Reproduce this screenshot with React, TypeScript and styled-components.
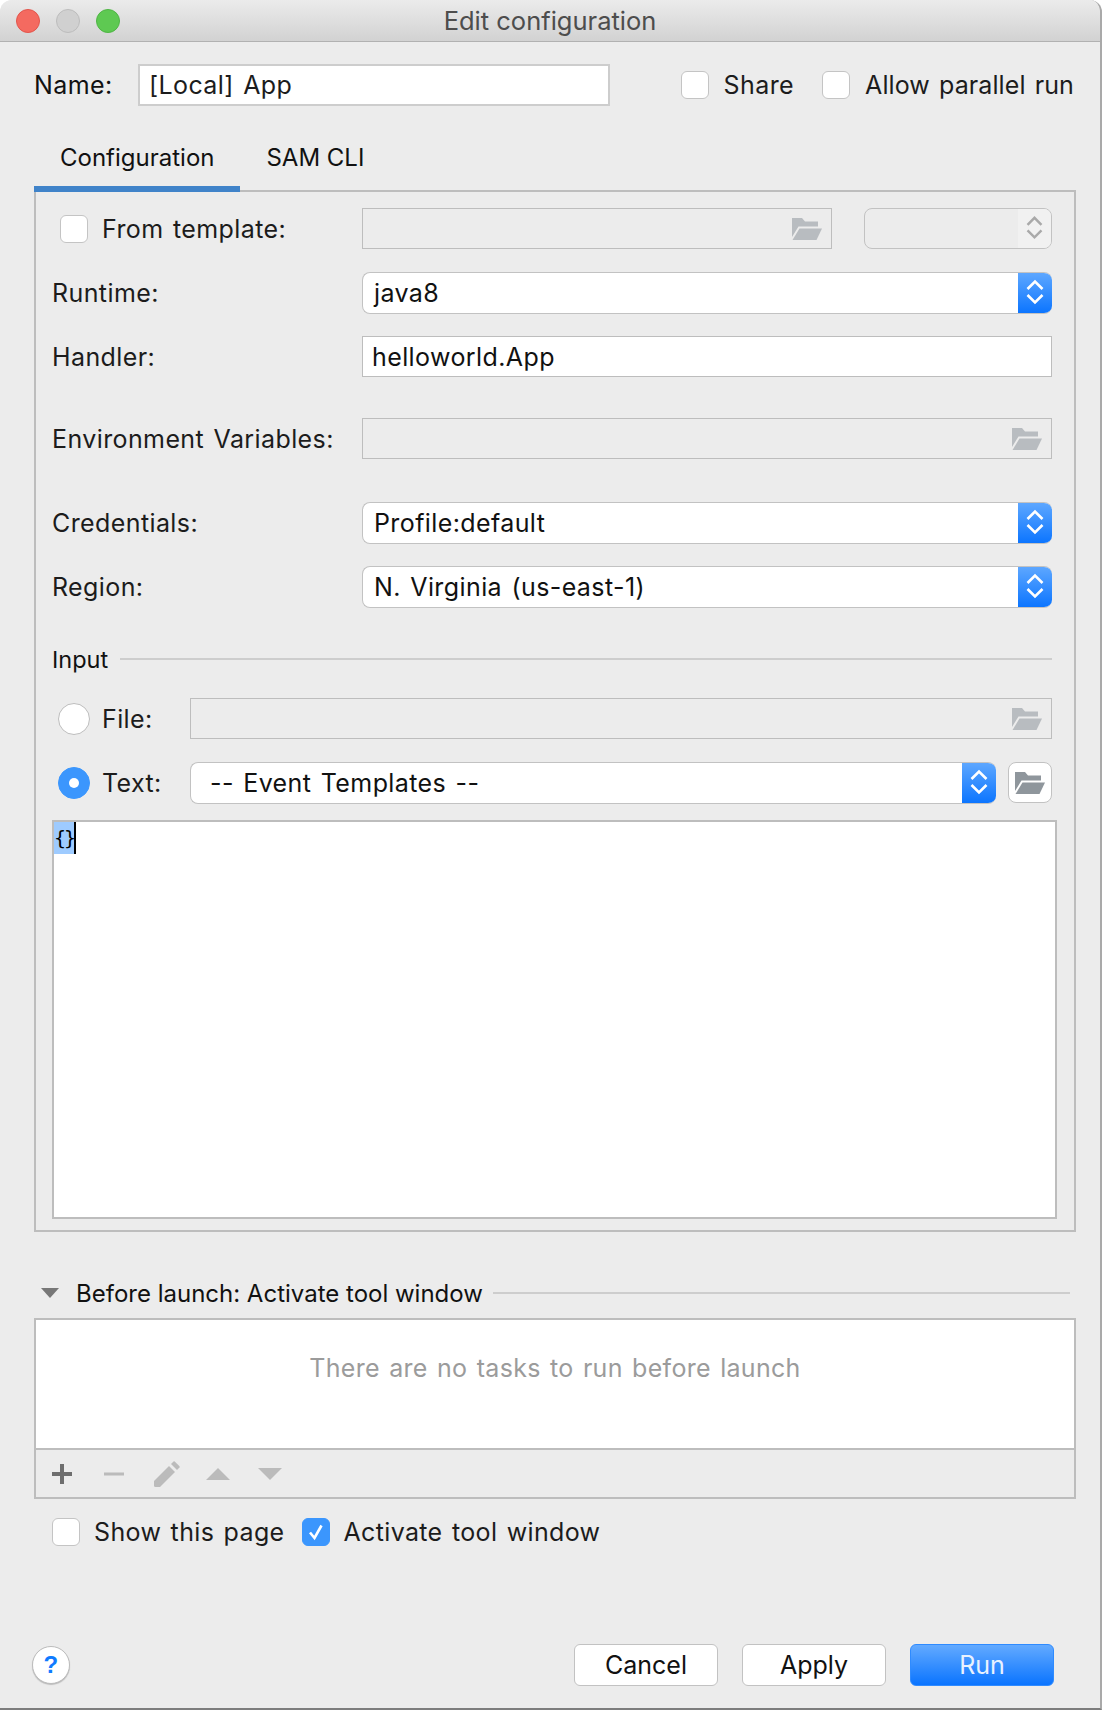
import React from "react";
import styled, { createGlobalStyle } from "styled-components";

const Global = createGlobalStyle`
  html, body { margin: 0; padding: 0; background: #fff; }
  * { box-sizing: border-box; }
  body { font-family: Inter, "Liberation Sans", sans-serif; color: #1c1c1c; }
`;

const Window = styled.div`
  width: 1102px;
  height: 1710px;
  display: flex;
  flex-direction: column;
  background: #ececec;
  border-right: 2px solid #a9a9a9;
  border-bottom: 2px solid #7d7d7d;
  border-radius: 12px 12px 0 0;
  font-size: 25px;
  letter-spacing: 0.4px;
  word-spacing: 2px;
  overflow: hidden;
`;
const TitleBar = styled.div`
  height: 42px;
  flex: none;
  display: flex;
  align-items: center;
  padding-left: 16px;
  gap: 16px;
  position: relative;
  background: linear-gradient(#ebebeb, #d2d2d2);
  border-bottom: 1px solid #b1b1b1;
`;
const Light = styled.span<{ $c: string; $b: string }>`
  width: 24px;
  height: 24px;
  border-radius: 50%;
  background: ${(p) => p.$c};
  border: 1px solid ${(p) => p.$b};
`;
const Title = styled.div`
  position: absolute;
  left: 0;
  right: 0;
  top: 5px;
  text-align: center;
  font-size: 25.5px;
  letter-spacing: 0;
  word-spacing: 0;
  line-height: 32px;
  color: #4d4d4d;
`;
const Body = styled.div`
  flex: 1;
  display: flex;
  flex-direction: column;
  padding: 0 24px 22px 34px;
`;
const NameRow = styled.div`
  margin-top: 22px;
  height: 42px;
  display: flex;
  align-items: center;
  padding-right: 2px;
`;
const NameLabel = styled.label`
  width: 104px;
  color: #111;
`;
const NameInput = styled.div`
  width: 472px;
  height: 42px;
  background: #fff;
  border: 2px solid #cdcdcd;
  padding-left: 9px;
  display: flex;
  align-items: center;
  white-space: pre;
`;
const Checks = styled.div`
  margin-left: auto;
  display: flex;
  align-items: center;
  gap: 28px;
`;
const CheckWrap = styled.label`
  display: flex;
  align-items: center;
  gap: 15px;
  white-space: nowrap;
`;
const TightCheckWrap = styled(CheckWrap)`
  letter-spacing: 0.1px;
`;
const CheckBox = styled.span<{ $on?: boolean }>`
  width: 28px;
  height: 28px;
  flex: none;
  display: flex;
  align-items: center;
  justify-content: center;
  border-radius: 6px;
  background: ${(p) => (p.$on ? "#3b96fd" : "#fff")};
  border: 1px solid ${(p) => (p.$on ? "#3b96fd" : "#c4c4c4")};
`;
const Tabs = styled.div`
  display: flex;
  margin-top: 40px;
  position: relative;
  z-index: 1;
`;
const Tab = styled.div<{ $on?: boolean }>`
  padding: 0 26px 16px;
  font-size: 24px;
  letter-spacing: 0;
  word-spacing: 0;
  line-height: 24px;
  border-bottom: 6px solid ${(p) => (p.$on ? "#4083c9" : "transparent")};
  color: #111;
`;
const Panel = styled.div`
  margin-top: -2px;
  height: 1042px;
  border: 2px solid #bdbdbd;
  padding: 16px 22px 0 16px;
  display: flex;
  flex-direction: column;
`;
const FieldRow = styled.div<{ $top?: number; $col?: number }>`
  display: grid;
  grid-template-columns: ${(p) => p.$col ?? 310}px 1fr;
  align-items: center;
  margin-top: ${(p) => p.$top ?? 0}px;
  height: 41px;
`;
const FieldLabel = styled.label`
  white-space: nowrap;
  display: flex;
  align-items: center;
`;
const Offset = styled(CheckWrap)`
  margin-left: 8px;
  gap: 14px;
`;
const TemplateFields = styled.div`
  display: flex;
  gap: 32px;
`;
const PathField = styled.div<{ $off?: boolean }>`
  flex: 1;
  height: 41px;
  background: ${(p) => (p.$off ? "transparent" : "#fff")};
  border: 1px solid #bdbdbd;
  display: flex;
  align-items: center;
  justify-content: ${(p) => (p.$off ? "flex-end" : "flex-start")};
  padding: 0 9px;
  color: #111;
`;
const Select = styled.div<{ $pad?: number }>`
  flex: 1;
  height: 42px;
  background: #fff;
  border: 1px solid #c2c2c2;
  border-right: 0;
  border-radius: 8px;
  display: flex;
  align-items: center;
  justify-content: space-between;
  overflow: hidden;
  padding-left: ${(p) => p.$pad ?? 11}px;
  color: #111;
`;
const Arrow = styled.span`
  width: 34px;
  height: 42px;
  margin: -1px 0;
  flex: none;
  background: linear-gradient(#5fa8ff, #0a74ff);
  display: flex;
`;
const Spinner = styled.div`
  width: 188px;
  height: 41px;
  flex: none;
  border: 1px solid #c2c2c2;
  border-radius: 8px;
  display: flex;
  justify-content: flex-end;
  overflow: hidden;
`;
const SpinnerArrow = styled.span`
  width: 33px;
  height: 39px;
  background: #f1f1f1;
  display: flex;
  align-items: center;
`;
const Section = styled.div`
  margin-top: 37px;
  height: 30px;
  display: flex;
  align-items: center;
  gap: 12px;
  font-size: 23.5px;
  letter-spacing: 0;
  color: #111;
`;
const Rule = styled.span`
  flex: 1;
  height: 2px;
  background: #cdcdcd;
`;
const InputRow = styled.div`
  display: flex;
  gap: 12px;
`;
const FolderButton = styled.div`
  width: 44px;
  height: 41px;
  flex: none;
  background: #fff;
  border: 1px solid #c2c2c2;
  border-radius: 8px;
  display: flex;
  align-items: center;
  justify-content: center;
`;
const Radio = styled.span<{ $on?: boolean }>`
  width: 32px;
  height: 32px;
  flex: none;
  border-radius: 50%;
  background: ${(p) => (p.$on ? "#3b96fd" : "#fff")};
  border: 1px solid ${(p) => (p.$on ? "#3b96fd" : "#bdbdbd")};
  display: flex;
  align-items: center;
  justify-content: center;
  &::after {
    content: "";
    width: 10px;
    height: 10px;
    border-radius: 50%;
    background: ${(p) => (p.$on ? "#fff" : "transparent")};
  }
`;
const RadioWrap = styled(CheckWrap)`
  margin-left: 6px;
  gap: 12px;
`;
const Editor = styled.div`
  margin: 17px -5px 0 0;
  height: 399px;
  background: #fff;
  border: 2px solid #bdbdbd;
  font-family: "DejaVu Sans Mono", monospace;
  font-size: 20px;
  letter-spacing: -2px;
  line-height: 32px;
  display: flex;
  align-items: flex-start;
  color: #000;
`;
const Selected = styled.span`
  background: #9ecbff;
  height: 32px;
  width: 20px;
`;
const Caret = styled.span`
  width: 2px;
  height: 32px;
  background: #000;
`;
const BeforeRow = styled.div`
  margin-top: 49px;
  height: 24px;
  display: flex;
  align-items: center;
  padding: 0 6px 0 7px;
  font-size: 24px;
  letter-spacing: 0;
  word-spacing: 0;
  color: #111;
`;
const BeforeText = styled.span`
  margin: 0 10px 0 17px;
  white-space: nowrap;
`;
const TaskTable = styled.div`
  margin-top: 13px;
  height: 181px;
  border: 2px solid #bdbdbd;
  display: flex;
  flex-direction: column;
`;
const TaskList = styled.div`
  height: 130px;
  flex: none;
  background: #fff;
  border-bottom: 2px solid #bdbdbd;
  display: flex;
  align-items: center;
  justify-content: center;
  color: #9b9b9b;
  padding-bottom: 32px;
  letter-spacing: 0.3px;
`;
const Toolbar = styled.div`
  flex: 1;
  display: flex;
  align-items: center;
  padding-left: 16px;
  gap: 32px;
`;
const ToolIcon = styled.svg<{ $shift?: number }>`
  flex: none;
  margin-left: ${(p) => p.$shift ?? 0}px;
`;
const OptionsRow = styled.div`
  margin-top: 19px;
  padding-left: 18px;
  display: flex;
  align-items: center;
  gap: 17px;
  height: 28px;
`;
const OptionWrap = styled(CheckWrap)`
  gap: 14px;
  letter-spacing: 0.35px;
`;
const Footer = styled.div`
  margin: auto -2px 0 -2px;
  height: 42px;
  display: flex;
  align-items: center;
  padding-right: 24px;
`;
const Help = styled.div`
  width: 38px;
  height: 38px;
  border-radius: 50%;
  background: #fff;
  border: 1px solid #bcbcbc;
  box-shadow: 0 1px 1px rgba(0, 0, 0, 0.2);
  display: flex;
  align-items: center;
  justify-content: center;
  color: #0f7bff;
  font-weight: 700;
  font-size: 24px;
  font-family: "Liberation Sans", sans-serif;
`;
const Buttons = styled.div`
  margin-left: auto;
  display: flex;
  gap: 24px;
`;
const Button = styled.button<{ $primary?: boolean }>`
  width: 144px;
  height: 42px;
  font: inherit;
  border-radius: 6px;
  border: 1px solid ${(p) => (p.$primary ? "#2f8bff" : "#c2c2c2")};
  background: ${(p) => (p.$primary ? "linear-gradient(#63aaff, #0a74ff)" : "#fff")};
  color: ${(p) => (p.$primary ? "#e9f2ff" : "#111")};
  padding: 0;
`;

const Folder = ({ color }: { color: string }) => (
  <svg width="30" height="22" viewBox="0 0 30 22" fill={color}>
    <path d="M0 0H10L13 3.5H26V8.5H6.5L0 19Z" />
    <path d="M7.5 10.5H30L24.5 22H0.5Z" />
  </svg>
);
const Chevrons = ({ color, h }: { color: string; h: number }) => (
  <svg width="34" height={h} viewBox="0 0 34 42" fill="none" stroke={color} strokeWidth="2.6">
    <path d="M9.5 17L17 9.5L24.5 17" />
    <path d="M9.5 23L17 30.5L24.5 23" />
  </svg>
);

const Check = ({ label, on }: { label: string; on?: boolean }) => (
  <>
    <CheckBox $on={on}>
      {on && (
        <svg width="20" height="20" viewBox="0 0 20 20" fill="none" stroke="#fff" strokeWidth="2.6">
          <path d="M4 10.5L8.5 16L15.5 3.5" />
        </svg>
      )}
    </CheckBox>
    {label}
  </>
);

export default function App() {
  return (
    <Window>
      <Global />
      <TitleBar>
        <Light $c="#f46a60" $b="#e2554c" />
        <Light $c="#d0d0d0" $b="#bcbcbc" />
        <Light $c="#5ec952" $b="#4fb545" />
        <Title>Edit configuration</Title>
      </TitleBar>
      <Body>
        <NameRow>
          <NameLabel>Name:</NameLabel>
          <NameInput>[Local] App</NameInput>
          <Checks>
            <CheckWrap><Check label="Share" /></CheckWrap>
            <TightCheckWrap><Check label="Allow parallel run" /></TightCheckWrap>
          </Checks>
        </NameRow>
        <Tabs>
          <Tab $on>Configuration</Tab>
          <Tab>SAM CLI</Tab>
        </Tabs>
        <Panel>
          <FieldRow>
            <Offset><Check label="From template:" /></Offset>
            <TemplateFields>
              <PathField $off><Folder color="#b8bcc0" /></PathField>
              <Spinner>
                <SpinnerArrow><Chevrons color="#a9a9a9" h={39} /></SpinnerArrow>
              </Spinner>
            </TemplateFields>
          </FieldRow>
          <FieldRow $top={23}>
            <FieldLabel>Runtime:</FieldLabel>
            <Select><span>java8</span><Arrow><Chevrons color="#fff" h={42} /></Arrow></Select>
          </FieldRow>
          <FieldRow $top={23}>
            <FieldLabel>Handler:</FieldLabel>
            <PathField>helloworld.App</PathField>
          </FieldRow>
          <FieldRow $top={41}>
            <FieldLabel>Environment Variables:</FieldLabel>
            <PathField $off><Folder color="#b8bcc0" /></PathField>
          </FieldRow>
          <FieldRow $top={43}>
            <FieldLabel>Credentials:</FieldLabel>
            <Select><span>Profile:default</span><Arrow><Chevrons color="#fff" h={42} /></Arrow></Select>
          </FieldRow>
          <FieldRow $top={23}>
            <FieldLabel>Region:</FieldLabel>
            <Select><span>N. Virginia (us-east-1)</span><Arrow><Chevrons color="#fff" h={42} /></Arrow></Select>
          </FieldRow>
          <Section>Input<Rule /></Section>
          <FieldRow $top={24} $col={138}>
            <RadioWrap><Radio />File:</RadioWrap>
            <PathField $off><Folder color="#b8bcc0" /></PathField>
          </FieldRow>
          <FieldRow $top={23} $col={138}>
            <RadioWrap><Radio $on />Text:</RadioWrap>
            <InputRow>
              <Select $pad={19}><span>-- Event Templates --</span><Arrow><Chevrons color="#fff" h={42} /></Arrow></Select>
              <FolderButton><Folder color="#8f969c" /></FolderButton>
            </InputRow>
          </FieldRow>
          <Editor>
            <Selected>{"{}"}</Selected>
            <Caret />
          </Editor>
        </Panel>
        <BeforeRow>
          <svg width="18" height="10" viewBox="0 0 18 10" fill="#777">
            <path d="M0 0H18L9 10Z" />
          </svg>
          <BeforeText>Before launch: Activate tool window</BeforeText>
          <Rule />
        </BeforeRow>
        <TaskTable>
          <TaskList>There are no tasks to run before launch</TaskList>
          <Toolbar>
            <ToolIcon width="20" height="20" viewBox="0 0 20 20" fill="#6e6e6e">
              <path d="M8 0H12V8H20V12H12V20H8V12H0V8H8Z" />
            </ToolIcon>
            <ToolIcon width="20" height="20" viewBox="0 0 20 20" fill="#bbb">
              <path d="M0 8.5H20V11.5H0Z" />
            </ToolIcon>
            <ToolIcon $shift={-2} width="26" height="26" viewBox="0 0 26 26" fill="#bbb">
              <path d="M0 20L15 5L21 11L6 26H1.5Q0 26 0 24.5Z" />
              <path d="M17 3L19.5 0.5Q20 0 20.7 0.5L25.5 5.3Q26 6 25.5 6.5L23 9Z" />
            </ToolIcon>
            <ToolIcon $shift={-6} width="24" height="12" viewBox="0 0 24 12" fill="#bbb">
              <path d="M0 12L12 0L24 12Z" />
            </ToolIcon>
            <ToolIcon $shift={-4} width="24" height="12" viewBox="0 0 24 12" fill="#bbb">
              <path d="M0 0H24L12 12Z" />
            </ToolIcon>
          </Toolbar>
        </TaskTable>
        <OptionsRow>
          <OptionWrap><Check label="Show this page" /></OptionWrap>
          <OptionWrap><Check label="Activate tool window" on /></OptionWrap>
        </OptionsRow>
        <Footer>
          <Help>?</Help>
          <Buttons>
            <Button>Cancel</Button>
            <Button>Apply</Button>
            <Button $primary>Run</Button>
          </Buttons>
        </Footer>
      </Body>
    </Window>
  );
}
